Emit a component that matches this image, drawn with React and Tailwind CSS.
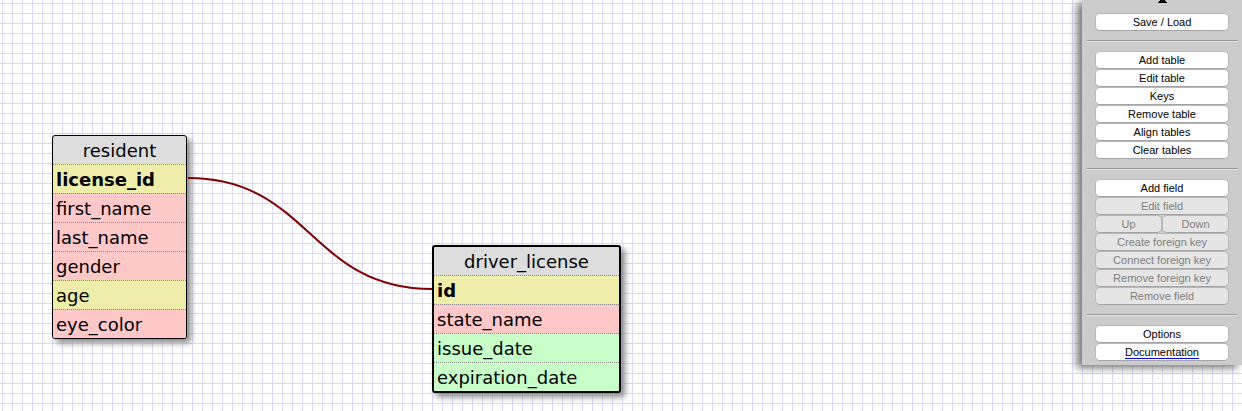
import React from "react";

const tables = [
  {
    name: "resident",
    frame: "left-[52px] top-[135px] w-[135px] border",
    fields: [
      { name: "license_id", color: "bg-[#eeeeaa]", primary: true },
      { name: "first_name", color: "bg-[#ffc8c8]" },
      { name: "last_name", color: "bg-[#ffc8c8]" },
      { name: "gender", color: "bg-[#ffc8c8]" },
      { name: "age", color: "bg-[#eeeeaa]" },
      { name: "eye_color", color: "bg-[#ffc8c8]" },
    ],
  },
  {
    name: "driver_license",
    frame: "left-[432px] top-[245px] w-[189px] border-2",
    fields: [
      { name: "id", color: "bg-[#eeeeaa]", primary: true },
      { name: "state_name", color: "bg-[#ffc8c8]" },
      { name: "issue_date", color: "bg-[#c8ffc8]" },
      { name: "expiration_date", color: "bg-[#c8ffc8]" },
    ],
  },
];

function TableNode({ table }) {
  return (
    <section
      className={
        "absolute overflow-hidden rounded-[3px] border-black bg-[#dddddd] text-lg leading-[26px] shadow-[4px_4px_6px_#888888] " +
        table.frame
      }
    >
      <h2 className="pt-[2px] text-center">{table.name}</h2>
      <ul>
        {table.fields.map((f) => (
          <li
            key={f.name}
            className={
              "border-t border-dotted border-[#888888] px-[3px] pt-[2px] " +
              f.color +
              (f.primary ? " font-bold" : "")
            }
          >
            {f.name}
          </li>
        ))}
      </ul>
    </section>
  );
}

function PanelButton({ children, disabled }) {
  return (
    <button
      type="button"
      disabled={disabled}
      className="h-[18px] w-full rounded-[5px] border border-[#b8b8b8] border-b-[#a4a4a4] bg-white text-[11px] leading-4 text-black disabled:bg-[#e5e5e5] disabled:text-[#808080]"
    >
      {children}
    </button>
  );
}

function Rule() {
  return <hr className="my-[9px] h-[2px] border-t border-b border-t-[#999999] border-b-[#e4e4e4]" />;
}

function Group({ children }) {
  return <div className="flex flex-col px-2">{children}</div>;
}

export default function App() {
  return (
    <main className="relative flex min-h-screen items-start justify-end overflow-hidden bg-white bg-[linear-gradient(to_right,#d9d9f3_1px,transparent_1px),linear-gradient(to_bottom,#d9d9f3_1px,transparent_1px)] bg-[size:10px_10px] bg-[position:2px_3px] font-['DejaVu_Sans',sans-serif] text-black">
      {tables.map((t) => (
        <TableNode key={t.name} table={t} />
      ))}
      <svg
        className="pointer-events-none absolute left-[187px] top-[177px]"
        width="246"
        height="114"
        viewBox="0 0 246 114"
        fill="none"
        aria-hidden="true"
      >
        <path d="M1 1C123 1 123 112 245 112" stroke="#800000" strokeWidth="2" />
      </svg>

      <aside className="relative w-40 bg-[#cccccc] px-[5px] pb-1 font-['Liberation_Sans',Arial,sans-serif] shadow-[-5px_3px_8px_#777777]">
        <div className="flex h-[13px] justify-center">
          <svg width="10" height="4" viewBox="0 0 10 4" aria-hidden="true">
            <path d="M3 0H8V1H9V2H10V3H1V2H2V1H3Z" fill="#000" />
          </svg>
        </div>
        <Group>
          <PanelButton>Save / Load</PanelButton>
        </Group>
        <Rule />
        <Group>
          <PanelButton>Add table</PanelButton>
          <PanelButton>Edit table</PanelButton>
          <PanelButton>Keys</PanelButton>
          <PanelButton>Remove table</PanelButton>
          <PanelButton>Align tables</PanelButton>
          <PanelButton>Clear tables</PanelButton>
        </Group>
        <Rule />
        <Group>
          <PanelButton>Add field</PanelButton>
          <PanelButton disabled>Edit field</PanelButton>
          <div className="flex">
            <PanelButton disabled>Up</PanelButton>
            <PanelButton disabled>Down</PanelButton>
          </div>
          <PanelButton disabled>Create foreign key</PanelButton>
          <PanelButton disabled>Connect foreign key</PanelButton>
          <PanelButton disabled>Remove foreign key</PanelButton>
          <PanelButton disabled>Remove field</PanelButton>
        </Group>
        <Rule />
        <Group>
          <PanelButton>Options</PanelButton>
          <a
            href="#documentation"
            className="flex h-[18px] items-center justify-center rounded-[5px] border border-[#b8b8b8] border-b-[#a4a4a4] bg-white text-[11px] text-black"
          >
            <span className="border-b border-[#0000ee] leading-3">Documentation</span>
          </a>
        </Group>
      </aside>
    </main>
  );
}
